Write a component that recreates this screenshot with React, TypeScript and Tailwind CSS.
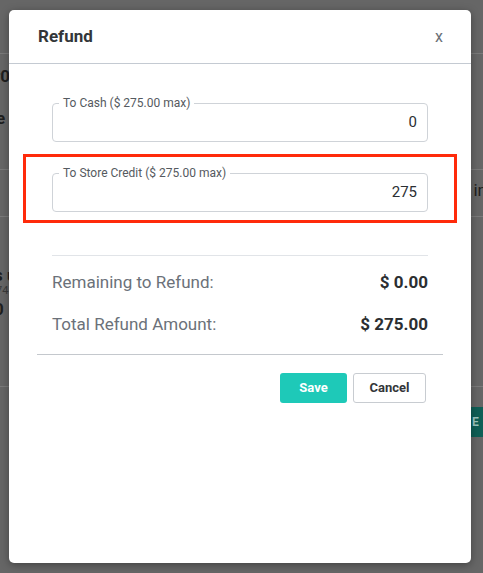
import React from 'react'

const font = { fontFamily: 'Roboto, "Liberation Sans", sans-serif' }

function OutlinedField({ label, value }: { label: string; value: string }) {
  return (
    <div className="relative h-[39px] rounded-[4px] border border-[#cfd3d8] bg-white">
      <span className="absolute -top-[9px] left-[6px] bg-white px-[4px] text-[12px] leading-[16px] text-[#555a60]">
        {label}
      </span>
      <div className="flex h-full items-center justify-end pr-[10px] text-[15px] text-[#2b2f33]">{value}</div>
    </div>
  )
}

export default function App() {
  return (
    <div className="relative h-[573px] w-full overflow-hidden bg-[#666666]" style={font}>
      {/* dimmed page behind the dialog */}
      <div className="flex flex-col text-[#1f1f1f]">
        <div className="h-[54px] border-b border-[#7a7a7a]" />
        <div className="flex h-[116px] flex-col gap-[22px] border-b border-[#7a7a7a] pt-[12px] text-[17px] font-bold leading-[20px]">
          <span className="-ml-[6px]">r0</span>
          <span className="-ml-[4px]">e</span>
        </div>
        <div className="flex h-[47px] items-center justify-end border-b border-[#7a7a7a] text-[17px] leading-[20px]">
          <span className="-mt-[6px] -mr-[4px]">in</span>
        </div>
        <div className="flex h-[169px] flex-col pt-[48px] text-[17px] font-bold leading-[20px]">
          <span className="-ml-[6px]">s u</span>
          <span className="-ml-[4px] text-[11px] font-normal leading-[12px] text-[#3a3a3a]">74</span>
          <span className="-ml-[6px] mt-[2px]">0</span>
        </div>
        <div className="flex h-[50px] items-start justify-end border-t border-[#7a7a7a] pt-[20px]">
          <div className="flex h-[30px] w-[14px] items-center bg-[#0f5f56] pl-[3px] text-[12px] font-bold text-[#9cc7c1]">E</div>
        </div>
      </div>

      {/* dialog */}
      <div className="absolute left-[9px] top-[10px] flex h-[553px] w-[462px] flex-col rounded-[5px] bg-white shadow-[0_2px_8px_rgba(0,0,0,0.35)]">
        <div className="flex h-[54px] items-center justify-between border-b border-[#c4cad2] pl-[29px] pr-[28px]">
          <h2 className="text-[17px] font-bold text-[#333639]">Refund</h2>
          <span className="text-[16px] text-[#6b7178]">x</span>
        </div>

        <div className="px-[43px] pt-[39px]">
          <OutlinedField label="To Cash ($ 275.00 max)" value="0" />
        </div>

        <div className="mx-[14px] mt-[12px] border-[3px] border-[#ff2a0a] px-[26px] pt-[16px] pb-[8px]">
          <OutlinedField label="To Store Credit ($ 275.00 max)" value="275" />
        </div>

        <div className="mx-[43px] mt-[32px] border-t border-[#e1e4e8]" />

        <div className="flex flex-col gap-[20px] px-[43px] pt-[15px]">
          <div className="flex items-center justify-between text-[17px] leading-[22px]">
            <span className="text-[#6b7179]">Remaining to Refund:</span>
            <span className="font-bold text-[#2b2e31]">$ 0.00</span>
          </div>
          <div className="flex items-center justify-between text-[17px] leading-[22px]">
            <span className="text-[#6b7179]">Total Refund Amount:</span>
            <span className="font-bold text-[#2b2e31]">$ 275.00</span>
          </div>
        </div>

        <div className="mx-[28px] mt-[19px] border-t border-[#c4c8cd]" />

        <div className="flex justify-end gap-[6px] pr-[45px] pt-[18px]">
          <button className="h-[30px] w-[67px] rounded-[3px] bg-[#1ec9b8] text-[13px] font-bold text-white">Save</button>
          <button className="h-[30px] w-[73px] rounded-[3px] border border-[#c8ccd1] bg-white text-[13px] font-bold text-[#333639]">Cancel</button>
        </div>
      </div>
    </div>
  )
}
